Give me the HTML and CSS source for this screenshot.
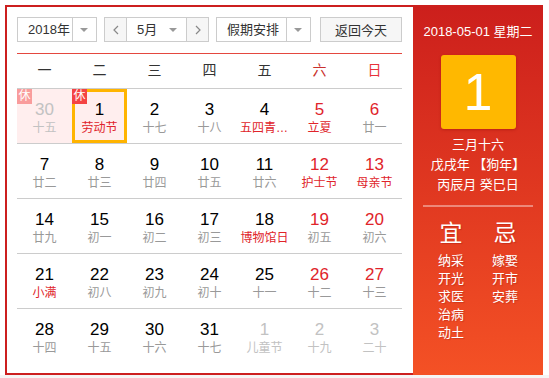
FILE: index.html
```html
<!DOCTYPE html>
<html lang="zh-CN">
<head>
    <meta charset="UTF-8">
    <meta name="viewport" content="width=device-width, initial-scale=1.0">
    <title>万年历</title>
    <link rel="stylesheet" href="styles.css">
</head>
<body>
    <div class="calendar">
        <!-- Left: toolbar and month grid -->
        <div class="main">
            <div class="toolbar">
                <div class="select year">
                    <span class="value">2018年</span>
                    <span class="drop"><i class="caret"></i></span>
                </div>
                <div class="month-picker">
                    <span class="step">
                        <svg width="6" height="10" viewBox="0 0 6 10"><polyline points="5,1 1,5 5,9" fill="none" stroke="#888" stroke-width="1.2"/></svg>
                    </span>
                    <div class="month">
                        <span class="value">5月</span>
                        <i class="caret"></i>
                    </div>
                    <span class="step next">
                        <svg width="6" height="10" viewBox="0 0 6 10"><polyline points="1,1 5,5 1,9" fill="none" stroke="#888" stroke-width="1.2"/></svg>
                    </span>
                </div>
                <div class="select holiday">
                    <span class="value">假期安排</span>
                    <span class="drop"><i class="caret"></i></span>
                </div>
                <button class="today">返回今天</button>
            </div>

            <div class="weekdays">
                <span>一</span><span>二</span><span>三</span><span>四</span><span>五</span>
                <span class="sat">六</span><span class="sun">日</span>
            </div>

            <div class="weeks">
                <div class="week">
                    <div class="day other rest"><span class="badge">休</span><b>30</b><span class="lunar">十五</span></div>
                    <div class="day rest current"><span class="badge">休</span><b>1</b><span class="lunar fest">劳动节</span></div>
                    <div class="day"><b>2</b><span class="lunar">十七</span></div>
                    <div class="day"><b>3</b><span class="lunar">十八</span></div>
                    <div class="day"><b>4</b><span class="lunar fest">五四青年节</span></div>
                    <div class="day weekend"><b>5</b><span class="lunar fest">立夏</span></div>
                    <div class="day weekend"><b>6</b><span class="lunar">廿一</span></div>
                </div>
                <div class="week">
                    <div class="day"><b>7</b><span class="lunar">廿二</span></div>
                    <div class="day"><b>8</b><span class="lunar">廿三</span></div>
                    <div class="day"><b>9</b><span class="lunar">廿四</span></div>
                    <div class="day"><b>10</b><span class="lunar">廿五</span></div>
                    <div class="day"><b>11</b><span class="lunar">廿六</span></div>
                    <div class="day weekend"><b>12</b><span class="lunar fest">护士节</span></div>
                    <div class="day weekend"><b>13</b><span class="lunar fest">母亲节</span></div>
                </div>
                <div class="week">
                    <div class="day"><b>14</b><span class="lunar">廿九</span></div>
                    <div class="day"><b>15</b><span class="lunar">初一</span></div>
                    <div class="day"><b>16</b><span class="lunar">初二</span></div>
                    <div class="day"><b>17</b><span class="lunar">初三</span></div>
                    <div class="day"><b>18</b><span class="lunar fest">博物馆日</span></div>
                    <div class="day weekend"><b>19</b><span class="lunar">初五</span></div>
                    <div class="day weekend"><b>20</b><span class="lunar">初六</span></div>
                </div>
                <div class="week">
                    <div class="day"><b>21</b><span class="lunar fest">小满</span></div>
                    <div class="day"><b>22</b><span class="lunar">初八</span></div>
                    <div class="day"><b>23</b><span class="lunar">初九</span></div>
                    <div class="day"><b>24</b><span class="lunar">初十</span></div>
                    <div class="day"><b>25</b><span class="lunar">十一</span></div>
                    <div class="day weekend"><b>26</b><span class="lunar">十二</span></div>
                    <div class="day weekend"><b>27</b><span class="lunar">十三</span></div>
                </div>
                <div class="week">
                    <div class="day"><b>28</b><span class="lunar">十四</span></div>
                    <div class="day"><b>29</b><span class="lunar">十五</span></div>
                    <div class="day"><b>30</b><span class="lunar">十六</span></div>
                    <div class="day"><b>31</b><span class="lunar">十七</span></div>
                    <div class="day other"><b>1</b><span class="lunar">儿童节</span></div>
                    <div class="day other"><b>2</b><span class="lunar">十九</span></div>
                    <div class="day other"><b>3</b><span class="lunar">二十</span></div>
                </div>
            </div>
        </div>

        <!-- Right: selected day details -->
        <div class="side">
            <div class="date">2018-05-01 星期二</div>
            <div class="big-day">1</div>
            <div class="lunar-info">
                <p>三月十六</p>
                <p>戊戌年 【狗年】</p>
                <p>丙辰月 癸巳日</p>
            </div>
            <div class="almanac">
                <div class="col">
                    <h3>宜</h3>
                    <p>纳采</p><p>开光</p><p>求医</p><p>治病</p><p>动土</p>
                </div>
                <div class="col">
                    <h3>忌</h3>
                    <p>嫁娶</p><p>开市</p><p>安葬</p>
                </div>
            </div>
        </div>
    </div>
    <div class="footer"></div>
</body>
</html>
```

FILE: styles.css
```css
body {
    margin: 0;
    padding: 5px 0 0 5px;
    background: #fff;
    font-family: 'Liberation Sans', 'Noto Sans CJK SC', sans-serif;
    color: #333;
}
.calendar {
    display: flex;
    width: 538px;
    height: 370px;
}
.main {
    width: 408px;
    box-sizing: border-box;
    border: 2px solid #cc1f1f;
    border-right: none;
    padding: 10px 11px 0 10px;
}
.toolbar {
    display: flex;
    height: 25px;
    padding-bottom: 11px;
    border-bottom: 1px solid #e4473f;
    font-size: 13px;
}
.select {
    display: flex;
    height: 25px;
    box-sizing: border-box;
    border: 1px solid #ccc;
    background: #fff;
}
.select .value {
    line-height: 23px;
    padding-left: 10px;
}
.drop {
    display: flex;
    align-items: center;
    justify-content: center;
    width: 24px;
    border-left: 1px solid #ccc;
}
.caret {
    display: block;
    width: 0;
    height: 0;
    border-left: 4px solid transparent;
    border-right: 4px solid transparent;
    border-top: 4px solid #999;
}
.year {
    width: 80px;
}
.year .value {
    width: 45px;
}
.month-picker {
    display: flex;
    width: 105px;
    height: 25px;
    box-sizing: border-box;
    border: 1px solid #ccc;
    margin-left: 7px;
}
.step {
    display: flex;
    align-items: center;
    justify-content: center;
    width: 21px;
    background: #f6f6f6;
    border-right: 1px solid #ccc;
}
.step.next {
    border-right: none;
    border-left: 1px solid #ccc;
}
.month {
    display: flex;
    align-items: center;
    flex: 1;
    padding: 0 9px 0 10px;
    line-height: 23px;
}
.month .value {
    flex: 1;
}
.holiday {
    width: 95px;
    margin-left: 7px;
}
.holiday .value {
    width: 60px;
}
.today {
    width: 82px;
    height: 25px;
    margin-left: 9px;
    border: 1px solid #ccc;
    background: #f6f6f6;
    font: inherit;
    color: #333;
    padding: 0;
}
.weekdays {
    display: grid;
    grid-template-columns: repeat(7, 55px);
    height: 33px;
    padding-top: 1px;
    line-height: 31px;
    text-align: center;
    font-size: 14px;
    color: #333;
}
.weekdays .sat {
    color: #c9302c;
}
.weekdays .sun {
    color: #e8323a;
}
.week {
    display: grid;
    grid-template-columns: repeat(7, 55px);
    border-top: 1px solid #ccc;
}
.day {
    position: relative;
    height: 54px;
    box-sizing: border-box;
    padding: 10px 3px 0;
    text-align: center;
}
.day b {
    display: block;
    font-weight: normal;
    font-size: 17px;
    line-height: 21px;
    color: #000;
}
.lunar {
    display: block;
    font-size: 12px;
    line-height: 16px;
    color: #999;
    white-space: nowrap;
    overflow: hidden;
    text-overflow: ellipsis;
}
.lunar.fest {
    color: #e0242a;
}
.weekend b {
    color: #e0242a;
}
.rest {
    background: #ffeeee;
}
.badge {
    position: absolute;
    top: 0;
    left: 0;
    width: 15px;
    height: 15px;
    line-height: 15px;
    font-size: 12px;
    color: #fff;
    background: #f44343;
}
.other b,
.other .lunar {
    color: #c2c2c2;
}
.other .badge {
    background: #f99c9c;
}
.current {
    box-shadow: inset 0 0 0 3px #ffb400;
}
.side {
    width: 130px;
    background: linear-gradient(to bottom, #cc1f1c, #f45125);
    color: #fff;
    text-align: center;
    padding-top: 17px;
    box-sizing: border-box;
}
.date {
    font-size: 13px;
    line-height: 20px;
}
.big-day {
    width: 75px;
    height: 74px;
    margin: 13px auto 0;
    border-radius: 3px;
    background: #ffb800;
    box-shadow: 0 1px 3px rgba(120, 0, 0, 0.3);
    font-size: 52px;
    line-height: 74px;
}
.lunar-info {
    margin-top: 6px;
    font-size: 13px;
    line-height: 20px;
}
.lunar-info p {
    margin: 0;
}
.almanac {
    display: grid;
    grid-template-columns: 54px 54px;
    justify-content: center;
    margin: 10px 10px 0;
    padding-top: 11px;
    border-top: 2px solid rgba(255, 255, 255, 0.4);
    text-shadow: 1px 1px 1px rgba(120, 0, 0, 0.25);
}
.almanac h3 {
    margin: 0 0 4px;
    font-size: 23px;
    line-height: 30px;
    font-weight: normal;
}
.almanac p {
    margin: 0;
    font-size: 13px;
    line-height: 18px;
}
.footer {
    height: 10px;
    margin-left: -5px;
    background: #f5f5f5;
}
```
